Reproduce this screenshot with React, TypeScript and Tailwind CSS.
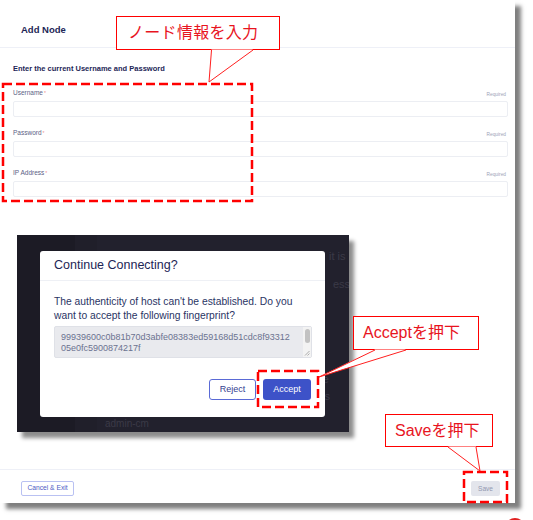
const sans = { fontFamily: '"Liberation Sans", Arial, sans-serif' };
const jp = { fontFamily: '"Liberation Sans", "Noto Sans CJK JP", sans-serif' };

const Field = ({ label }: { label: string }) => (
  <div className="flex flex-col">
    <div className="flex items-end justify-between h-[8px] leading-[8px]">
      <span className="text-[6.5px] text-[#5b6285]">
        {label}
        <span className="text-[#f08a8a] text-[5px] align-top ml-[1px]">*</span>
      </span>
      <span className="text-[4.8px] text-[#9ea3b8] mb-[-2px] mr-[2px]">Required</span>
    </div>
    <div className="mt-[4px] h-[16px] border border-[#eceef3] rounded-[2px] bg-white" />
  </div>
);

const Callout = ({ text, className }: { text: string; className: string }) => (
  <div
    className={`absolute border border-[#f00] bg-white flex items-center text-[16px] text-[#e8141e] ${className}`}
    style={jp}
  >
    {text}
  </div>
);

const ConnectDialog = () => (
  <div className="absolute left-[17px] top-[235px] w-[332px] h-[197px] bg-[#22212d] overflow-hidden shadow-[5px_6px_4px_rgba(0,0,0,0.45)] pl-[23px] pt-[16px]">
    {/* backdrop of the screenshot */}
    <div className="absolute left-0 top-0 bottom-0 w-[58px] bg-[#1c1b25]" />
    <div className="absolute left-[58px] top-0 bottom-0 w-[22px] bg-[#201f2a]" />
    <span className="absolute left-[312px] top-[13px] text-[11px] text-[#3b3a47]">it is</span>
    <span className="absolute left-[316px] top-[41px] text-[11px] text-[#3b3a47]">ess</span>
    <span className="absolute left-[296px] top-[136px] text-[11px] text-[#3b3a47]">ure this</span>
    <span className="absolute left-[88px] top-[181px] text-[10px] text-[#3b3a47]">admin-cm</span>

    <div className="relative w-[285px] h-[166px] bg-white rounded-[3px] flex flex-col" style={sans}>
      <div className="h-[30px] flex items-center pl-[14px] border-b border-[#eef0f5] text-[12.5px] text-[#1d2556]">
        Continue Connecting?
      </div>
      <div className="flex flex-col px-[14px] pt-[14px]">
        <p className="w-[252px] text-[10.3px] leading-[14px] text-[#2a3464]">
          The authenticity of host can't be established. Do you want to accept the following fingerprint?
        </p>
        <div className="mt-[3px] h-[32px] w-[258px] bg-[#e9eaee] border border-[#dfe1e7] rounded-[2px] flex">
          <div className="flex-1 pl-[6px] pt-[5px] text-[9px] leading-[11px] text-[#6b7290] whitespace-nowrap">
            99939600c0b81b70d3abfe08383ed59168d51cdc8f93312
            <br />
            05e0fc5900874217f
          </div>
          <div className="w-[8px] flex flex-col items-center pt-[2px] bg-[#f3f3f3]">
            <div className="w-[5px] h-[14px] rounded-[3px] bg-[#c2c2c2]" />
            <svg className="mt-auto mb-[1px]" width="6" height="6" viewBox="0 0 6 6">
              <path d="M5.5 1 L1 5.5 M5.5 3.5 L3.5 5.5" stroke="#9a9a9a" strokeWidth="0.8" />
            </svg>
          </div>
        </div>
        <div className="mt-[21px] flex justify-end gap-[7px]">
          <button className="w-[47px] h-[21px] border-[1.5px] border-[#5a6ad6] rounded-[3px] text-[9px] text-[#34408f] bg-white">
            Reject
          </button>
          <button className="w-[48px] h-[21px] rounded-[3px] text-[9px] text-white bg-[#3d52c8]">
            Accept
          </button>
        </div>
      </div>
    </div>
  </div>
);

export default function App() {
  return (
    <div className="relative w-[533px] h-[520px] bg-white overflow-hidden" style={sans}>
      <div className="w-[515px] h-[503px] bg-white flex flex-col shadow-[6px_6px_4px_rgba(0,0,0,0.5)]">
        <div className="h-[48px] flex items-start pt-[24px] pl-[21px] border-b border-[#eef0f7] text-[9.5px] leading-[12px] font-bold text-[#1d2556]">
          Add Node
        </div>
        <div className="flex flex-col pl-[13px] pr-[7px] pt-[16px]">
          <div className="text-[7.5px] leading-[10px] font-bold text-[#1d2556]">
            Enter the current Username and Password
          </div>
          <div className="mt-[15px] flex flex-col gap-[12px]">
            <Field label="Username" />
            <Field label="Password" />
            <Field label="IP Address" />
          </div>
        </div>
        <div className="mt-auto h-[34px] border-t border-[#eef0f7] flex items-start justify-between pt-[11px] pl-[21px] pr-[15px]">
          <button className="w-[53px] h-[15px] border border-[#b9c1f2] rounded-[2px] text-[6.7px] text-[#4e5cc4]">
            Cancel &amp; Exit
          </button>
          <button className="w-[29px] h-[15px] rounded-[2px] bg-[#e3e5ec] text-[6.6px] text-[#9298b0]">
            Save
          </button>
        </div>
      </div>

      <ConnectDialog />

      <Callout text="ノード情報を入力" className="left-[116px] top-[16px] w-[164px] h-[34px] pl-[11px] tracking-[0.3px]" />
      <Callout text="Acceptを押下" className="left-[353px] top-[316px] w-[126px] h-[34px] pl-[9px]" />
      <Callout text="Saveを押下" className="left-[385px] top-[414px] w-[108px] h-[33px] pl-[9px]" />

      <svg className="absolute left-0 top-0 pointer-events-none" width="533" height="520" viewBox="0 0 533 520">
        <g fill="none" stroke="#ff0000" strokeWidth="2.5" strokeDasharray="9 4">
          <rect x="3" y="84" width="249" height="117" />
          <rect x="258" y="371" width="60" height="36" />
          <rect x="464" y="472" width="43" height="30" />
        </g>
        <g fill="#fff" stroke="none">
          <polygon points="211.5,49.5 253,49.5 209,82" />
          <polygon points="375,349.5 406,349.5 319,377" />
          <polygon points="448,446.5 476,446.5 480,471" />
        </g>
        <g fill="none" stroke="#ff2020" strokeWidth="1">
          <polyline points="211.5,50 209,82 253,50" />
          <polyline points="375,350 319,377 406,350" />
          <polyline points="448,447 480,471 476,447" />
        </g>
        <circle cx="515" cy="528" r="9" fill="none" stroke="#e02020" strokeWidth="2" />
      </svg>
    </div>
  );
}
